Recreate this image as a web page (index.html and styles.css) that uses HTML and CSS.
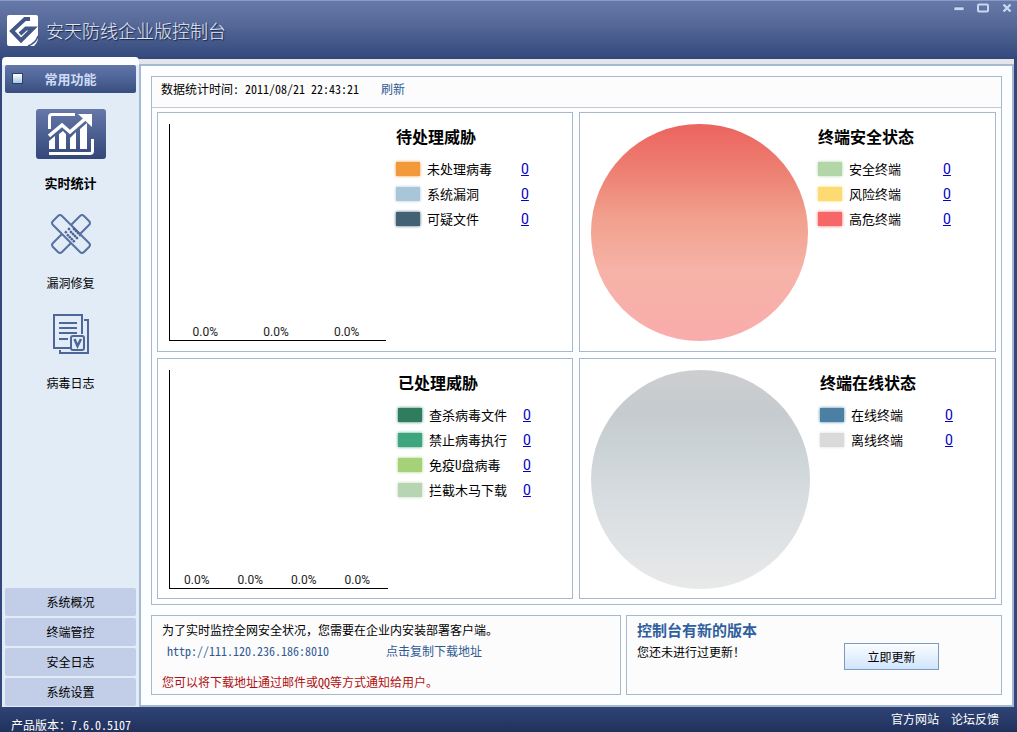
FILE: index.html
```html
<!DOCTYPE html>
<html lang="zh-CN">
<head>
<meta charset="utf-8">
<meta name="viewport" content="width=device-width, initial-scale=1">
<title>安天防线企业版控制台</title>
<link rel="stylesheet" href="styles.css">
</head>
<body>
<div class="app">
  <header class="titlebar">
    <svg class="logo" viewBox="0 0 31 31" aria-hidden="true">
      <path fill="#fff" d="M2 0H29Q31 0 31 2V23Q31 27 27 31H2Q0 31 0 29V2Q0 0 2 0Z"/>
      <path fill="none" stroke="#425787" stroke-width="4" d="M23 4H18L5 16L14 25.500L26 13.500H19L13 19"/>
      <path fill="none" stroke="#425787" stroke-width="1.500" d="M31 21Q29 28 21 31"/>
    </svg>
    <h1 class="title">安天防线企业版控制台</h1>
    <div class="window-controls">
      <button type="button" aria-label="最小化"><svg viewBox="0 0 12 10"><path fill="#c9d8f1" stroke="#3f5283" stroke-width=".5" d="M1 4H11V7.500H1Z"/></svg></button>
      <button type="button" aria-label="最大化"><svg viewBox="0 0 12 10"><rect x="1" y="1.500" width="10" height="7" rx="1" fill="none" stroke="#c9d8f1" stroke-width="2"/></svg></button>
      <button type="button" aria-label="关闭"><svg viewBox="0 0 12 10"><path fill="none" stroke="#c9d8f1" stroke-width="2.400" d="M2.500 1.500L9.500 8.500M9.500 1.500L2.500 8.500"/></svg></button>
    </div>
  </header>

  <div class="body">
    <nav class="sidebar">
      <button type="button" class="group-head"><span class="marker"></span>常用功能</button>
      <div class="shortcuts">
        <button type="button" class="shortcut active">
          <span class="shortcut-icon">
            <svg viewBox="0 0 46 44" width="46" height="44" fill="none" aria-hidden="true">
              <path stroke="#fff" stroke-width="3" d="M1.500 17V5Q1.500 2.500 4 2.500H27M1 41.500H42Q44.500 41.500 44.500 39V27"/>
              <path stroke="#fff" stroke-width="3.500" d="M1 24L14 13L22 20L38 6"/>
              <path fill="#fff" d="M30 2H44V15Z"/>
              <path fill="#fff" d="M1 29L7 24V37H1ZM11 22L15 19L18 22V37H11ZM22 26L28 20V37H22ZM32 17L39 11V37H32Z"/>
            </svg>
          </span>
          <span class="shortcut-label">实时统计</span>
        </button>
        <button type="button" class="shortcut">
          <span class="shortcut-icon">
            <svg viewBox="0 0 42 42" width="42" height="42" fill="none" stroke="#5870a3" stroke-width="2" aria-hidden="true">
              <path d="M12 21L3 12Q1 10 3 8L8 3Q10 1 12 3L39 30Q41 32 39 34L34 39Q32 41 30 39Z"/>
              <path d="M21 12L30 3Q32 1 34 3L39 8Q41 10 39 12L30 21M12 21L3 30Q1 32 3 34L8 39Q10 41 12 39L21 30"/>
              <path stroke="#4b6194" stroke-width="2.400" stroke-dasharray="2.400 2" d="M15 20L21 14M17 23L25 15M19 25L27 17M21 27L29 19M23 29L30 22"/>
            </svg>
          </span>
          <span class="shortcut-label">漏洞修复</span>
        </button>
        <button type="button" class="shortcut">
          <span class="shortcut-icon">
            <svg viewBox="0 0 38 42" width="38" height="42" fill="none" stroke="#4f6698" stroke-width="2" aria-hidden="true">
              <path d="M30 21V2H2V35H18M32 7H36V40H8V37"/>
              <path d="M7 10H25M7 15H25M7 20H25M7 26H16"/>
              <rect x="19" y="23" width="13" height="14" rx="2"/>
              <path stroke-width="2.500" d="M22.500 26L25.500 33L29 26"/>
            </svg>
          </span>
          <span class="shortcut-label">病毒日志</span>
        </button>
      </div>
      <div class="groups">
        <button type="button">系统概况</button>
        <button type="button">终端管控</button>
        <button type="button">安全日志</button>
        <button type="button">系统设置</button>
      </div>
    </nav>

    <main class="main">
      <div class="content">
        <section class="stats">
          <div class="stats-head">
            <span>数据统计时间: 2011/08/21 22:43:21</span>
            <a href="#refresh">刷新</a>
          </div>
          <div class="cards">
            <section class="card">
              <div class="chart bars"><span>0.0%</span><span>0.0%</span><span>0.0%</span></div>
              <div class="legend">
                <h2>待处理威胁</h2>
                <ul>
                  <li><i class="swatch orange"></i><span>未处理病毒</span><a href="#pending-virus">0</a></li>
                  <li><i class="swatch sky"></i><span>系统漏洞</span><a href="#holes">0</a></li>
                  <li><i class="swatch slate"></i><span>可疑文件</span><a href="#suspicious">0</a></li>
                </ul>
              </div>
            </section>
            <section class="card">
              <div class="chart pie risk"></div>
              <div class="legend">
                <h2>终端安全状态</h2>
                <ul>
                  <li><i class="swatch mint"></i><span>安全终端</span><a href="#safe">0</a></li>
                  <li><i class="swatch yellow"></i><span>风险终端</span><a href="#risk">0</a></li>
                  <li><i class="swatch red"></i><span>高危终端</span><a href="#danger">0</a></li>
                </ul>
              </div>
            </section>
            <section class="card tall">
              <div class="chart bars"><span>0.0%</span><span>0.0%</span><span>0.0%</span><span>0.0%</span></div>
              <div class="legend">
                <h2>已处理威胁</h2>
                <ul>
                  <li><i class="swatch forest"></i><span>查杀病毒文件</span><a href="#killed">0</a></li>
                  <li><i class="swatch green"></i><span>禁止病毒执行</span><a href="#blocked">0</a></li>
                  <li><i class="swatch lime"></i><span>免疫U盘病毒</span><a href="#usb">0</a></li>
                  <li><i class="swatch sage"></i><span>拦截木马下载</span><a href="#trojan">0</a></li>
                </ul>
              </div>
            </section>
            <section class="card tall">
              <div class="chart pie online"></div>
              <div class="legend">
                <h2>终端在线状态</h2>
                <ul>
                  <li><i class="swatch blue"></i><span>在线终端</span><a href="#online">0</a></li>
                  <li><i class="swatch gray"></i><span>离线终端</span><a href="#offline">0</a></li>
                </ul>
              </div>
            </section>
          </div>
        </section>

        <div class="notices">
          <section class="notice deploy">
            <p>为了实时监控全网安全状况，您需要在企业内安装部署客户端。</p>
            <p class="links"><a href="#client">http://111.120.236.186:8010</a><a href="#copy">点击复制下载地址</a></p>
            <p class="warning">您可以将下载地址通过邮件或QQ等方式通知给用户。</p>
          </section>
          <section class="notice update">
            <div>
              <h2>控制台有新的版本</h2>
              <p>您还未进行过更新！</p>
            </div>
            <button type="button" class="update-button">立即更新</button>
          </section>
        </div>
      </div>
    </main>
  </div>

  <footer class="statusbar">
    <span class="version">产品版本：7.6.0.5107</span>
    <a href="#site">官方网站</a>
    <a href="#forum">论坛反馈</a>
  </footer>
</div>
</body>
</html>
```
FILE: styles.css
```css
* {
  box-sizing: border-box;
}

body,
h1,
h2,
p,
ul {
  margin: 0;
  padding: 0;
}

body {
  font: 12px/20px "Noto Sans Mono CJK SC", "Noto Sans CJK SC", sans-serif;
  color: #000;
}

button {
  padding: 0;
  border: 0;
  background: none;
  color: inherit;
  font: inherit;
  cursor: pointer;
}

ul {
  list-style: none;
}

a {
  color: #2f5a92;
  text-decoration: none;
}

.app {
  display: flex;
  flex-direction: column;
  min-height: 100vh;
  background: #33477a;
}

/* Title bar */
.titlebar {
  display: flex;
  align-items: center;
  flex: none;
  height: 57px;
  padding: 2px 4px 0 7px;
  border-top: 1px solid #8a9cc4;
  background: linear-gradient(#6679a9, #566999 40%, #354a7d);
}

.logo {
  width: 31px;
  height: 31px;
  margin-right: 8px;
}

.title {
  font-family: "Noto Sans CJK SC", sans-serif;
  font-size: 18px;
  font-weight: 300;
  line-height: 30px;
  color: #e4ebf5;
  text-shadow: 1px 1px 1px #142040;
}

.window-controls {
  display: flex;
  align-self: flex-start;
  gap: 12px;
  margin-left: auto;
}

.window-controls button,
.window-controls svg {
  display: block;
  width: 12px;
  height: 10px;
}

/* Layout */
.body {
  display: flex;
  flex: 1;
  padding: 0 3px 0 2px;
}

.sidebar {
  display: flex;
  flex-direction: column;
  flex: none;
  width: 137px;
  padding: 0 3px;
  border-top: 8px solid #fbfdff;
  border-radius: 4px 4px 0 0;
  background: #e2ecf7;
}

.main {
  display: flex;
  flex: 1;
  min-width: 0;
  margin-top: 2px;
  padding-top: 5px;
  background: #e3e5e8;
}

.content {
  display: flex;
  flex-direction: column;
  flex: 1;
  gap: 10px;
  min-width: 0;
  padding: 10px;
  border: 2px solid #a6b9d2;
  background: #fdfeff;
}

/* Sidebar */
.group-head {
  position: relative;
  width: 100%;
  height: 28px;
  border-radius: 2px;
  background: linear-gradient(#6377a8, #52679a 40%, #384d80);
  color: #cddcf6;
  font-size: 13px;
  font-weight: 700;
}

.marker {
  position: absolute;
  top: 8px;
  left: 7px;
  width: 11px;
  height: 11px;
  border: 1px solid #2d4068;
  background: linear-gradient(#fff, #a5c9e6);
}

.shortcuts {
  display: flex;
  flex-direction: column;
  flex: 1;
  align-items: center;
  padding-top: 16px;
}

.shortcut {
  display: flex;
  flex-direction: column;
  align-items: center;
  gap: 14px;
  width: 70px;
  height: 100px;
}

.shortcut-icon {
  display: flex;
  align-items: center;
  justify-content: center;
  width: 70px;
  height: 50px;
  border-radius: 3px;
}

.active .shortcut-icon {
  background: linear-gradient(#6578a8, #33477a);
}

.active .shortcut-label {
  font-size: 13px;
  font-weight: 700;
}

.groups {
  display: flex;
  flex-direction: column;
  gap: 2px;
  padding-bottom: 1px;
}

.groups button {
  height: 28px;
  border-radius: 2px;
  background: #c2cde7;
}

/* Statistics */
.stats {
  display: flex;
  flex-direction: column;
  flex: 1;
  border: 1px solid #a9b9cc;
}

.stats-head {
  display: flex;
  gap: 22px;
  padding: 2px 9px 8px;
  border-bottom: 1px solid #c5c9ce;
  background: #fcfcfd;
}

.cards {
  display: grid;
  flex: 1;
  grid-template-columns: 416fr 417fr;
  grid-template-rows: 240fr 241fr;
  gap: 6px;
  padding: 4px 5px 5px;
}

.card {
  display: flex;
  gap: 10px;
  padding: 11px 11px 8px;
  border: 1px solid #a9b9cc;
  background: #fff;
}

.chart {
  flex: none;
  width: 217px;
  height: 217px;
}

.tall .chart {
  width: 219px;
  height: 219px;
}

.bars {
  display: flex;
  align-items: flex-end;
  padding-right: 4px;
  border: solid #000;
  border-width: 0 0 1px 1px;
  font-family: Roboto, sans-serif;
  line-height: 16px;
  color: #222;
  text-align: center;
}

.bars span {
  flex: 1;
}

.pie {
  border-radius: 50%;
}

.risk {
  background: linear-gradient(#ec645f, #ed8072 22%, #f1a08d 43%, #f7b3a8 68%, #f9acac);
}

.online {
  background: linear-gradient(#cdced0, #c6cbcf 20%, #ccd4d8 38%, #d8dde1 60%, #e8e9e9);
}

.legend h2 {
  margin-bottom: 8px;
  font-size: 16px;
  line-height: 24px;
}

.legend li {
  display: grid;
  grid-template-columns: 24px 87px auto;
  column-gap: 7px;
  align-items: center;
  height: 25px;
  font-size: 13px;
  white-space: nowrap;
}

.legend a {
  color: #0000c8;
  font-family: Roboto, sans-serif;
  font-size: 14px;
  text-decoration: underline;
}

.swatch {
  height: 14px;
  box-shadow: 0 0 3px currentColor;
  background: currentColor;
}

.orange { color: #f2993c; }
.sky { color: #a9c5d8; }
.slate { color: #426273; }
.mint { color: #b3d6a9; }
.yellow { color: #fedb72; }
.red { color: #f76767; }
.forest { color: #2f7d5e; }
.green { color: #3ea57e; }
.lime { color: #a5d279; }
.sage { color: #b7d4b3; }
.blue { color: #4c80a2; }
.gray { color: #dadada; }

/* Notices */
.notices {
  display: grid;
  grid-template-columns: 470fr 376fr;
  gap: 5px;
}

.notice {
  min-height: 80px;
  padding: 4px 10px 1px;
  border: 1px solid #a9b9cc;
  background: #fcfcfd;
}

.links {
  display: flex;
  gap: 57px;
  padding: 1px 5px 0;
}

.warning {
  margin-top: 11px;
  color: #b01010;
}

.update {
  display: flex;
  justify-content: space-between;
  padding-right: 62px;
}

.update h2 {
  color: #2f5f9e;
  font-size: 15px;
  line-height: 20px;
}

.update p {
  margin-top: 2px;
}

.update-button {
  align-self: center;
  width: 95px;
  height: 27px;
  border: 1px solid #7b9cc0;
  background: linear-gradient(#fafcff, #e6f1fe 50%, #cfe4fc);
}

/* Status bar */
.statusbar {
  display: flex;
  gap: 12px;
  flex: none;
  height: 25px;
  padding: 2px 18px 0 11px;
  background: linear-gradient(#2f4476, #20315c);
  color: #fff;
}

.statusbar a {
  color: #fff;
}

.version {
  align-self: flex-end;
  margin-right: auto;
  line-height: 14px;
}
```
